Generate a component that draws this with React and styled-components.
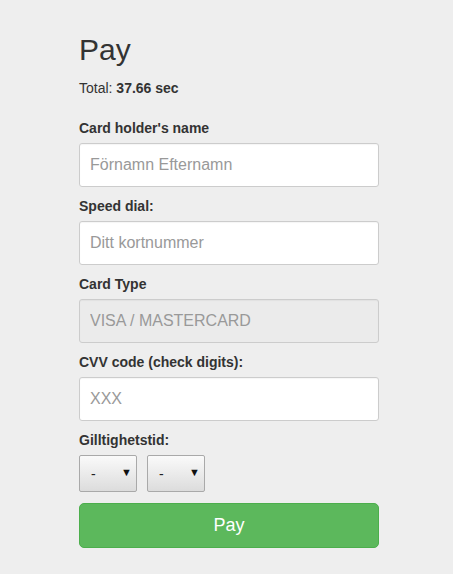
import React from 'react'
import styled, { createGlobalStyle } from 'styled-components';

const Global = createGlobalStyle`
  body {
    margin: 0;
    background: #eeeeee;
    font-family: "Liberation Sans", Arial, sans-serif;
    color: #333;
  }
`;

export default function App() {
  return (
    <>
      <Global />
      <Page>
        <Title>Pay</Title>
        <Total>Total: <b>37.66 sec</b></Total>
        <Form>
          <Label>Card holder's name</Label>
          <Input placeholder="Förnamn Efternamn" />
          <Label>Speed dial:</Label>
          <Input placeholder="Ditt kortnummer" />
          <Label>Card Type</Label>
          <Input placeholder="VISA / MASTERCARD" disabled />
          <Label>CVV code (check digits):</Label>
          <Input placeholder="XXX" />
          <Label>Gilltighetstid:</Label>
          <Selects>
            <SelectBox>
              <Select defaultValue="-">
                <option>-</option>
              </Select>
              <Arrow>▼</Arrow>
            </SelectBox>
            <SelectBox>
              <Select defaultValue="-">
                <option>-</option>
              </Select>
              <Arrow>▼</Arrow>
            </SelectBox>
          </Selects>
          <Button>Pay</Button>
        </Form>
      </Page>
    </>
  )
}

const Page = styled.div`
  width: 300px;
  margin-left: 79px;
  padding-top: 33px;
  padding-bottom: 26px;
`;

const Title = styled.h2`
  margin: 0;
  font-size: 30px;
  font-weight: 500;
  line-height: 33px;
`;

const Total = styled.p`
  margin: 12px 0 0;
  font-size: 14px;
  line-height: 20px;
`;

const Form = styled.form`
  display: flex;
  flex-direction: column;
  margin-top: 20px;
`;

const Label = styled.label`
  font-size: 14px;
  font-weight: bold;
  line-height: 20px;
  margin-bottom: 5px;
`;

const Input = styled.input`
  box-sizing: border-box;
  height: 44px;
  width: 100%;
  padding: 0 10px;
  margin-bottom: 9px;
  font-family: "Liberation Sans", Arial, sans-serif;
  font-size: 16px;
  color: #555;
  background: #fff;
  border: 1px solid #cccccc;
  border-radius: 3px;
  box-shadow: inset 0 1px 1px rgba(0, 0, 0, 0.04);
  &::placeholder {
    color: #999;
  }
  &:disabled {
    background: #ebebeb;
  }
`;

const Selects = styled.div`
  display: flex;
  gap: 10px;
`;

const SelectBox = styled.div`
  position: relative;
  width: 58px;
  height: 37px;
`;

const Select = styled.select`
  appearance: none;
  box-sizing: border-box;
  width: 100%;
  height: 100%;
  padding: 0 0 0 11px;
  font-family: "Liberation Sans", Arial, sans-serif;
  font-size: 14px;
  color: #222;
  background: linear-gradient(#fafafa, #dcdcdc);
  border: 1px solid #a9a9a9;
  border-radius: 2px;
`;

const Arrow = styled.span`
  position: absolute;
  right: 5px;
  top: 11px;
  font-size: 11px;
  color: #111;
  pointer-events: none;
`;

const Button = styled.button`
  margin-top: 11px;
  height: 45px;
  width: 100%;
  font-family: "Liberation Sans", Arial, sans-serif;
  font-size: 18px;
  color: #fff;
  background: #5cb85c;
  border: 1px solid #4cae4c;
  border-radius: 5px;
`;
